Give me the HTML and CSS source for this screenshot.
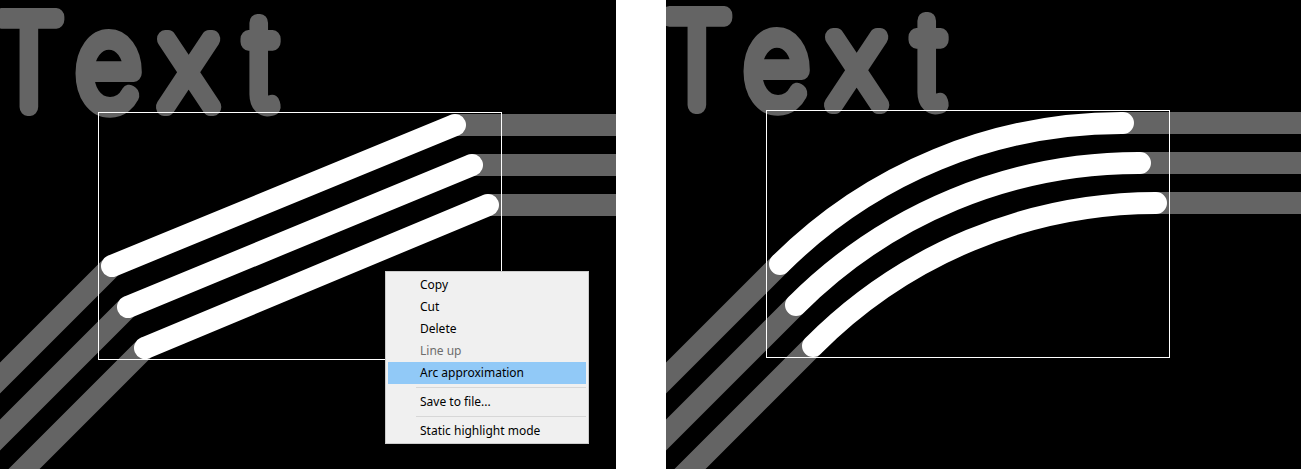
FILE: index.html
```html
<!DOCTYPE html>
<html lang="en">
<head>
<meta charset="utf-8">
<title>Arc approximation</title>
<link rel="stylesheet" href="styles.css">
</head>
<body>
<div class="stage">
  <div class="panel panel-left">
    <svg class="canvas" width="616" height="469" viewBox="0 0 616 469">
      <g class="traces-gray">
        <path d="M112 266 L-40 418"/>
        <path d="M128 307 L-40 475"/>
        <path d="M145 348 L5 488"/>
        <path d="M455 125 H700"/>
        <path d="M472 165 H700"/>
        <path d="M488 205 H700"/>
      </g>
      <g transform="scale(0.9 1)">
        <text class="label" x="32 120.5 209.5 290.5" y="107">Text</text>
      </g>
      <rect class="selbox" x="98.5" y="112.5" width="403" height="247"/>
      <g class="traces-white">
        <path d="M112 266 L455 125"/>
        <path d="M128 307 L472 165"/>
        <path d="M145 348 L488 205"/>
      </g>
    </svg>
    <div class="menu">
      <div class="item">Copy</div>
      <div class="item">Cut</div>
      <div class="item">Delete</div>
      <div class="item disabled">Line up</div>
      <div class="item active">Arc approximation</div>
      <div class="sep"></div>
      <div class="item">Save to file...</div>
      <div class="sep"></div>
      <div class="item">Static highlight mode</div>
    </div>
  </div>
  <div class="panel panel-right">
    <svg class="canvas" width="635" height="469" viewBox="0 0 635 469">
      <g transform="translate(2 -2)">
        <g class="traces-gray">
          <path d="M112 266 L-40 418"/>
          <path d="M128 307 L-40 475"/>
          <path d="M145 348 L5 488"/>
          <path d="M455 125 H700"/>
          <path d="M472 165 H700"/>
          <path d="M488 205 H700"/>
        </g>
        <g transform="scale(0.9 1)">
          <text class="label" x="32 120.5 209.5 290.5" y="107">Text</text>
        </g>
        <rect class="selbox" x="98.5" y="112.5" width="403" height="247"/>
        <g class="traces-white">
          <path d="M112 266 A484 484 0 0 1 455 125"/>
          <path d="M128 307 A484 484 0 0 1 472 165"/>
          <path d="M145 348 A484 484 0 0 1 488 205"/>
        </g>
      </g>
    </svg>
  </div>
</div>
</body>
</html>
```

FILE: styles.css
```css
html, body {
  margin: 0;
  padding: 0;
  background: #ffffff;
}

.stage {
  display: flex;
  gap: 50px;
  width: 1301px;
  height: 469px;
  overflow: hidden;
}

.panel {
  position: relative;
  height: 469px;
  background: #000000;
  overflow: hidden;
}

.panel-left {
  width: 616px;
  flex: 0 0 616px;
}

.panel-right {
  flex: 1 1 auto;
}

.canvas {
  display: block;
}

.traces-gray path {
  fill: none;
  stroke: #646464;
  stroke-width: 22;
  stroke-linecap: round;
}

.traces-white path {
  fill: none;
  stroke: #ffffff;
  stroke-width: 22;
  stroke-linecap: round;
}

.selbox {
  fill: none;
  stroke: #ffffff;
  stroke-width: 1;
}

.label {
  font-family: "Inter", "DejaVu Sans", sans-serif;
  font-weight: 100;
  font-size: 124px;
  fill: #646464;
  stroke: #646464;
  stroke-width: 17;
  stroke-linejoin: round;
  stroke-linecap: round;
  text-anchor: middle;
  vector-effect: non-scaling-stroke;
}

.menu {
  position: absolute;
  left: 385px;
  top: 271px;
  width: 204px;
  box-sizing: border-box;
  padding: 2px 2px 1px 2px;
  background: #f0f0f0;
  border: 1px solid #cccccc;
  font-family: "Noto Sans", "Open Sans", sans-serif;
  font-size: 12px;
  color: #000000;
}

.item {
  height: 22px;
  line-height: 22px;
  padding-left: 32px;
  white-space: nowrap;
}

.item.disabled {
  color: #6d6d6d;
}

.item.active {
  background: #91c9f7;
}

.sep {
  height: 7px;
  margin-left: 28px;
  display: flex;
  align-items: center;
}

.sep::before {
  content: "";
  display: block;
  width: 100%;
  height: 1px;
  background: #d7d7d7;
}
```
